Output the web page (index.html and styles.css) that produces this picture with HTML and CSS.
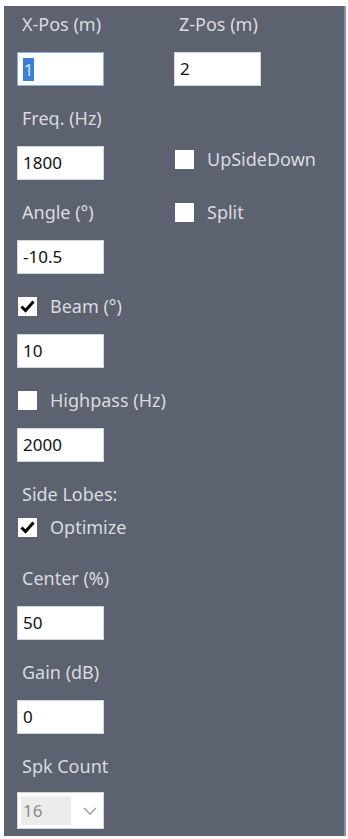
FILE: index.html
```html
<!DOCTYPE html>
<html>
<head>
<meta charset="utf-8">
<link rel="stylesheet" href="styles.css">
</head>
<body>
<div class="panel">
  <div class="col col-left">
    <div class="lbl">X-Pos (m)</div>
    <div class="field focus"><span class="sel">1</span></div>
    <div class="lbl after">Freq. (Hz)</div>
    <div class="field">1800</div>
    <div class="lbl after">Angle (°)</div>
    <div class="field">-10.5</div>
    <div class="chk after"><span class="box on"><svg viewBox="0 0 19 19" width="19" height="19"><path d="M3.5 9.5 L7.5 13.5 L15.5 4.5" fill="none" stroke="#000" stroke-width="3"/></svg></span><span class="ctext">Beam (°)</span></div>
    <div class="field">10</div>
    <div class="chk after"><span class="box"></span><span class="ctext">Highpass (Hz)</span></div>
    <div class="field">2000</div>
    <div class="lbl after">Side Lobes:</div>
    <div class="chk opt"><span class="box on"><svg viewBox="0 0 19 19" width="19" height="19"><path d="M3.5 9.5 L7.5 13.5 L15.5 4.5" fill="none" stroke="#000" stroke-width="3"/></svg></span><span class="ctext">Optimize</span></div>
    <div class="lbl center">Center (%)</div>
    <div class="field">50</div>
    <div class="lbl after">Gain (dB)</div>
    <div class="field">0</div>
    <div class="lbl after">Spk Count</div>
    <div class="combo"><span class="cval">16</span><span class="arrow"><svg viewBox="0 0 14 8" width="14" height="8"><path d="M1 1 L7 7 L13 1" fill="none" stroke="#9a9a9a" stroke-width="1.4"/></svg></span></div>
  </div>
  <div class="col col-right">
    <div class="lbl">Z-Pos (m)</div>
    <div class="field">2</div>
    <div class="chk up"><span class="box"></span><span class="ctext">UpSideDown</span></div>
    <div class="chk split"><span class="box"></span><span class="ctext">Split</span></div>
  </div>
</div>
</body>
</html>
```
FILE: styles.css
```css
html, body {
  margin: 0;
  padding: 0;
  background: #ffffff;
}
body {
  width: 348px;
  height: 839px;
  overflow: hidden;
  font-family: "Noto Sans", "DejaVu Sans", sans-serif;
}
.panel {
  margin: 6px 2px 0 4px;
  height: 830px;
  box-sizing: border-box;
  background: #5d6270;
  border-right: 2px solid #8b8f9b;
  display: flex;
  padding-top: 6px;
}
.col {
  display: flex;
  flex-direction: column;
  align-items: flex-start;
}
.col-left {
  width: 170px;
  flex: none;
  padding-left: 13px;
  box-sizing: border-box;
}
.lbl {
  height: 24px;
  line-height: 24px;
  padding-left: 5px;
  font-size: 18px;
  color: #d9dbdf;
  white-space: nowrap;
}
.after {
  margin-top: 20px;
}
.field {
  margin-top: 16px;
  width: 87px;
  height: 34px;
  box-sizing: border-box;
  background: #ffffff;
  border: 1px solid #d4d6da;
  padding-left: 5px;
  font-size: 17px;
  line-height: 32px;
  color: #111;
}
.field.focus {
  border-color: #8fb0e0;
}
.sel {
  display: inline-block;
  background: #3b7fd6;
  color: #cfe2ff;
  width: 11px;
  height: 23px;
  line-height: 23px;
  text-align: center;
  vertical-align: middle;
  margin-top: -2px;
}
.chk {
  height: 24px;
  display: flex;
  align-items: center;
  padding-left: 1px;
}
.box {
  width: 19px;
  height: 19px;
  background: #ffffff;
  display: block;
  flex: none;
}
.box svg {
  display: block;
}
.ctext {
  margin-left: 13px;
  font-size: 18px;
  color: #d9dbdf;
  white-space: nowrap;
}
.opt {
  margin-top: 9px;
}
.center {
  margin-top: 27px;
}
.combo {
  margin-top: 14px;
  width: 87px;
  height: 37px;
  box-sizing: border-box;
  background: #ffffff;
  border: 1px solid #d4d6da;
  display: flex;
  align-items: center;
  padding: 3px;
}
.cval {
  width: 50px;
  height: 29px;
  background: #ececec;
  color: #8a8a8a;
  font-size: 17px;
  line-height: 29px;
  padding-left: 2px;
  box-sizing: border-box;
}
.arrow {
  margin-left: 12px;
  display: flex;
}
.col-right .chk {
  padding-left: 1px;
}
.up {
  margin-top: 61px;
}
.split {
  margin-top: 29px;
}
```
